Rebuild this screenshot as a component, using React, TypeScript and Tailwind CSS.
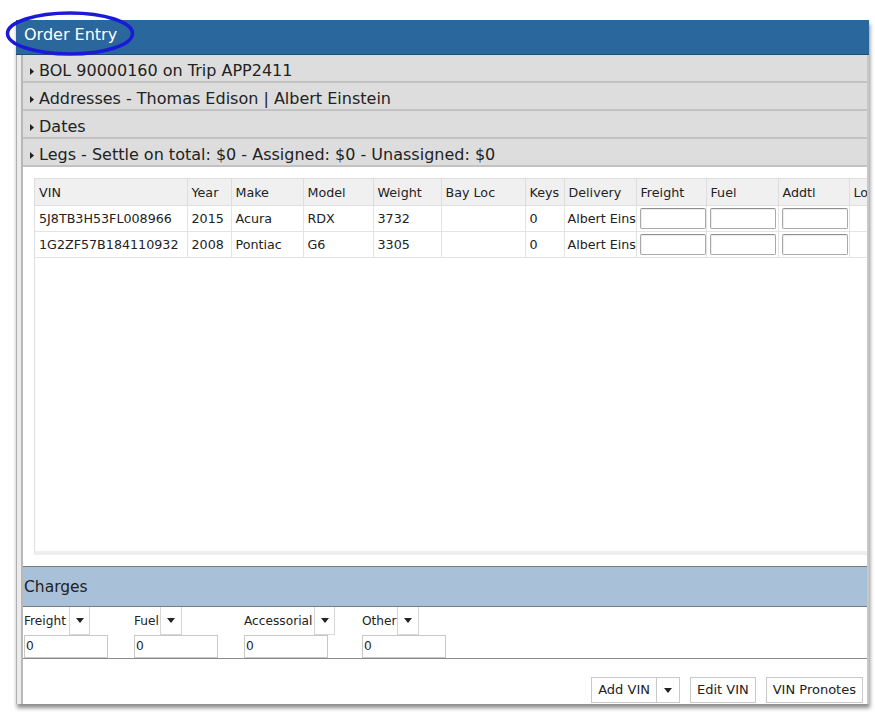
import React from "react";

const font = { fontFamily: '"DejaVu Sans", Verdana, sans-serif' };

const sections = [
  "BOL 90000160 on Trip APP2411",
  "Addresses - Thomas Edison | Albert Einstein",
  "Dates",
  "Legs - Settle on total: $0 - Assigned: $0 - Unassigned: $0",
];

const columns = [
  { name: "VIN", w: 152 },
  { name: "Year", w: 44 },
  { name: "Make", w: 72 },
  { name: "Model", w: 70 },
  { name: "Weight", w: 68 },
  { name: "Bay Loc", w: 84 },
  { name: "Keys", w: 39 },
  { name: "Delivery", w: 72 },
  { name: "Freight", w: 70 },
  { name: "Fuel", w: 72 },
  { name: "Addtl", w: 71 },
  { name: "Lo", w: 80 },
];

const vehicles = [
  { vin: "5J8TB3H53FL008966", year: "2015", make: "Acura", model: "RDX", weight: "3732", keys: "0", delivery: "Albert Einstein" },
  { vin: "1G2ZF57B184110932", year: "2008", make: "Pontiac", model: "G6", weight: "3305", keys: "0", delivery: "Albert Einstein" },
];

const charges = [
  { label: "Freight", labelW: 46, btnW: 20, groupW: 110 },
  { label: "Fuel", labelW: 27, btnW: 21, groupW: 110 },
  { label: "Accessorial", labelW: 71, btnW: 20, groupW: 118 },
  { label: "Other", labelW: 36, btnW: 21, groupW: 110 },
];

const Caret = () => (
  <svg width="8" height="5" viewBox="0 0 8 5" className="fill-[#222]">
    <path d="M0 0h8L4 5z" />
  </svg>
);

const RightCaret = () => (
  <svg width="4" height="7" viewBox="0 0 4 7" className="fill-[#222]">
    <path d="M0 0l4 3.5L0 7z" />
  </svg>
);

const CellInput = () => (
  <div className="h-[21px] w-[66px] rounded-[2px] border border-[#a9a9a9] border-t-[#8f8f8f] bg-white shadow-[inset_1px_1px_1px_rgba(0,0,0,0.08)]" />
);

export default function App() {
  return (
    <div className="relative h-[727px] w-[875px] overflow-hidden bg-white text-[#222]" style={font}>
      <div className="ml-[16px] mt-[20px] flex h-[684px] w-[853px] flex-col bg-white shadow-[1px_4px_4px_rgba(0,0,0,0.45)]">
        {/* title bar */}
        <div className="flex h-[35px] shrink-0 items-center border-b border-[#1f4f78] bg-[#29679d] pb-[4px] pl-[8px] text-[16px] text-white">
          Order Entry
        </div>

        <div className="flex min-h-0 flex-1">
          {/* left gutter */}
          <div className="w-[7px] shrink-0 border-l border-[#b0b0b0] border-r-2 border-r-[#b8b8b8] bg-[#ececec]" />

          <div className="flex min-w-0 flex-1 flex-col border-r-2 border-[#c8c8c8]">
            {sections.map((s) => (
              <div
                key={s}
                className="flex h-[28px] shrink-0 items-start gap-[5px] overflow-hidden border-b-2 border-[#c2c2c2] bg-[#dddddd] pl-[7px] pt-[6px] text-[16px] leading-[20px] whitespace-nowrap"
              >
                <span className="flex h-[20px] items-center">
                  <RightCaret />
                </span>
                <span>{s}</span>
              </div>
            ))}

            {/* vehicle grid */}
            <div className="flex min-h-0 flex-1 flex-col pb-[11px] pl-[11px] pt-[11px]">
              <div className="min-h-0 flex-1 overflow-hidden border-b-4 border-l border-t border-[#dedede] border-b-[#eeeeee]">
                <table className="table-fixed border-collapse text-[12.7px]" style={{ width: 822 }}>
                  <colgroup>
                    {columns.map((c) => (
                      <col key={c.name} style={{ width: c.w }} />
                    ))}
                  </colgroup>
                  <thead>
                    <tr className="h-[26px] bg-[#f0f0f0]">
                      {columns.map((c) => (
                        <th
                          key={c.name}
                          className="overflow-hidden whitespace-nowrap border-b border-r border-[#dedede] pl-[4px] pt-[2px] text-left font-normal"
                        >
                          {c.name}
                        </th>
                      ))}
                    </tr>
                  </thead>
                  <tbody>
                    {vehicles.map((v) => (
                      <tr key={v.vin} className="h-[26px]">
                        <td className="border-b border-r border-[#e3e3e3] pl-[4px] pt-[1px]">{v.vin}</td>
                        <td className="border-b border-r border-[#e3e3e3] pl-[4px] pt-[1px]">{v.year}</td>
                        <td className="border-b border-r border-[#e3e3e3] pl-[4px] pt-[1px]">{v.make}</td>
                        <td className="border-b border-r border-[#e3e3e3] pl-[4px] pt-[1px]">{v.model}</td>
                        <td className="border-b border-r border-[#e3e3e3] pl-[4px] pt-[1px]">{v.weight}</td>
                        <td className="border-b border-r border-[#e3e3e3] pl-[4px]" />
                        <td className="border-b border-r border-[#e3e3e3] pl-[4px] pt-[1px]">{v.keys}</td>
                        <td className="overflow-hidden text-clip whitespace-nowrap border-b border-r border-[#e3e3e3] pl-[3px] pt-[1px]">
                          {v.delivery}
                        </td>
                        <td className="border-b border-r border-[#e3e3e3] pl-[3px]">
                          <CellInput />
                        </td>
                        <td className="border-b border-r border-[#e3e3e3] pl-[3px]">
                          <CellInput />
                        </td>
                        <td className="border-b border-r border-[#e3e3e3] pl-[3px]">
                          <CellInput />
                        </td>
                        <td className="border-b border-r border-[#e3e3e3]" />
                      </tr>
                    ))}
                  </tbody>
                </table>
              </div>
            </div>

            {/* charges */}
            <div className="flex h-[41px] shrink-0 items-center border-y border-[#7a7a7a] bg-[#a9c0d9] pl-px pt-[3px] text-[15.5px]">
              Charges
            </div>
            <div className="flex h-[52px] shrink-0 border-b border-[#8a8a8a] pl-px text-[12.2px]">
              {charges.map((c) => (
                <div key={c.label} className="flex shrink-0 flex-col" style={{ width: c.groupW }}>
                  <div className="flex h-[28px]">
                    <div
                      className="flex items-center overflow-hidden whitespace-nowrap border-r border-[#d6d6d6] pt-px"
                      style={{ width: c.labelW }}
                    >
                      {c.label}
                    </div>
                    <div
                      className="flex items-center justify-center border-b border-r border-[#d6d6d6]"
                      style={{ width: c.btnW }}
                    >
                      <Caret />
                    </div>
                  </div>
                  <div className="flex h-[23px] w-[84px] items-center border border-[#c8c8c8] pl-px">0</div>
                </div>
              ))}
            </div>

            {/* actions */}
            <div className="flex h-[45px] shrink-0 items-start justify-end gap-[10px] pr-[4px] pt-[18px] text-[13px]">
              <div className="flex h-[26px] border border-[#c9c9c9]">
                <button className="h-full border-r border-[#c9c9c9] px-[6px]">Add VIN</button>
                <button className="flex h-full w-[22px] items-center justify-center">
                  <Caret />
                </button>
              </div>
              <button className="h-[26px] border border-[#c9c9c9] px-[6px]">Edit VIN</button>
              <button className="h-[26px] border border-[#c9c9c9] px-[6px]">VIN Pronotes</button>
            </div>
          </div>
        </div>
      </div>

      {/* annotation ellipse */}
      <svg className="pointer-events-none absolute left-0 top-0" width="150" height="70">
        <ellipse cx="70" cy="33.5" rx="62.5" ry="20.5" fill="none" stroke="#1a1ad8" strokeWidth="3.5" />
      </svg>
    </div>
  );
}
